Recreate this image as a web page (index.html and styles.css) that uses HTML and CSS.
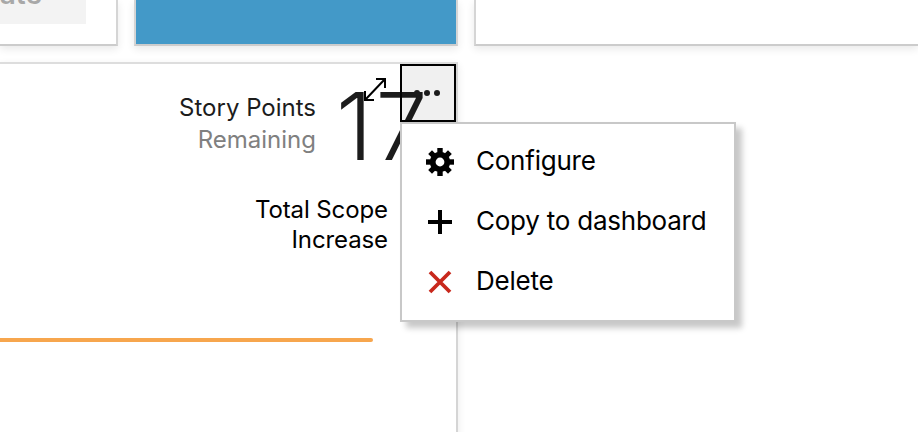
FILE: index.html
```html
<!DOCTYPE html>
<html lang="en">
<head>
<meta charset="utf-8">
<title>Dashboard</title>
<link rel="stylesheet" href="styles.css">
</head>
<body>
<main class="dashboard">
  <div class="row">
    <section class="tile tile-form"><button class="create">Create</button></section>
    <section class="tile tile-blue"></section>
    <section class="tile tile-wide"></section>
  </div>
  <section class="tile burndown">
    <div class="summary">
      <div class="labels"><div class="metric">Story Points</div><div class="muted">Remaining</div></div>
      <div class="value">17</div>
    </div>
    <div class="scope">Total Scope<br>Increase</div>
    <div class="line"></div>
    <svg class="expand" viewBox="0 0 24 26"><path d="M13 2H22V11M22 2L2 23M2 14V23H11" fill="none" stroke="#000" stroke-width="2"/></svg>
    <button class="more" aria-label="More actions"><svg viewBox="0 0 52 54"><g fill="#1c1c1c"><circle cx="15" cy="27" r="3"/><circle cx="25" cy="27" r="3"/><circle cx="35" cy="27" r="3"/></g></svg></button>
    <ul class="menu">
      <li><svg viewBox="0 0 28 28"><g fill="#000"><rect x="11.3" width="5.4" height="28"/><rect x="11.3" width="5.4" height="28" transform="rotate(45 14 14)"/><rect x="11.3" width="5.4" height="28" transform="rotate(90 14 14)"/><rect x="11.3" width="5.4" height="28" transform="rotate(135 14 14)"/><circle cx="14" cy="14" r="10.2"/></g><circle cx="14" cy="14" r="4.4" fill="#fff"/></svg><span>Configure</span></li>
      <li><svg viewBox="0 0 28 28"><path d="M14 2V26M2 14H26" stroke="#000" stroke-width="4"/></svg><span>Copy to dashboard</span></li>
      <li><svg viewBox="0 0 28 28"><path d="M4 4L24 24M24 4L4 24" stroke="#c8281c" stroke-width="3.8"/></svg><span>Delete</span></li>
    </ul>
  </section>
</main>
</body>
</html>
```
FILE: styles.css
```css
* { box-sizing: border-box; }
body { margin: 0; background: #fff; font-family: Inter, "Liberation Sans", sans-serif; color: #000; overflow: hidden; }
.dashboard { width: 918px; height: 432px; overflow: hidden; }
.row { display: flex; gap: 16px; height: 46px; margin-bottom: 16px; }
.tile { border: 2px solid #d5d5d5; box-shadow: 0 3px 8px rgba(0,0,0,.09); background: #fff; }
.row .tile { border-top: 0; border-bottom-color: #ccc; }
.tile-form { width: 118px; border-left: 0; display: flex; align-items: flex-start; overflow: hidden; }
.create { flex: none; width: 146px; height: 64px; margin: -40px 0 0 -60px; padding: 0 44px 0 0; border: 0; background: #f3f3f3; color: #a8a8a8; font: 600 28px/68px Inter, sans-serif; text-align: right; white-space: nowrap; }
.tile-blue { width: 324px; background: #4399c8; }
.tile-wide { flex: 1; border-right: 0; }
.burndown { position: relative; width: 458px; height: 390px; border-left: 0; border-top-color: #ddd; }
.summary { display: flex; justify-content: flex-end; height: 126px; padding-right: 27px; }
.labels { text-align: right; font-size: 24px; line-height: 32px; padding-top: 28px; margin-right: 20px; }
.metric { color: #1c1c1c; }
.muted { color: #808080; }
.value { width: 93px; padding-top: 16px; font-size: 93px; font-weight: 300; line-height: 93px; letter-spacing: 3px; color: #1c1c1c; white-space: nowrap; }
.scope { margin: 5px 68px 0 0; text-align: right; font-size: 24px; line-height: 30px; letter-spacing: -.1px; }
.line { width: 373px; height: 4px; margin-top: 83px; border-radius: 0 2px 2px 0; background: #f7a64e; }
.expand { position: absolute; left: 363px; top: 13px; width: 24px; height: 26px; }
.more { position: absolute; left: 400px; top: 0; width: 56px; height: 58px; padding: 0; border: 2px solid #000; background: rgba(0,0,0,.06); }
.more svg { display: block; width: 52px; height: 54px; }
.menu { position: absolute; left: 400px; top: 58px; width: 336px; height: 200px; margin: 0; padding: 8px 0 8px 24px; list-style: none; border: 2px solid #c8c8c8; background: #fff; box-shadow: 6px 6px 6px rgba(0,0,0,.22); }
.menu li { display: flex; align-items: center; height: 60px; font-size: 26px; letter-spacing: -.23px; white-space: nowrap; }
.menu span { padding-bottom: 4px; }
.menu svg { width: 28px; height: 28px; margin-right: 22px; flex: none; }
```
